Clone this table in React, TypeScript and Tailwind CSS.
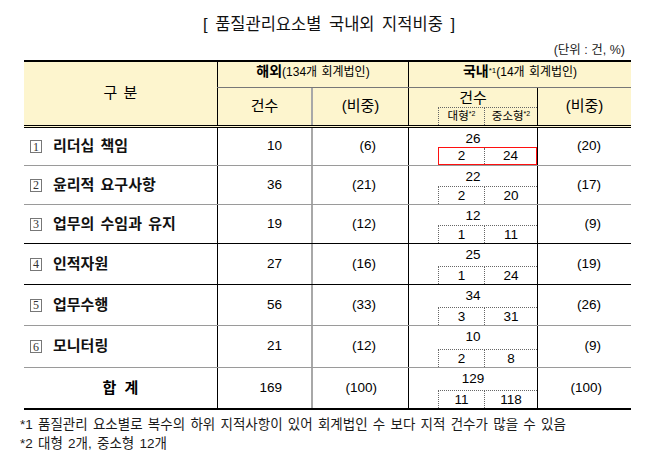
const FONT = { fontFamily: '"Liberation Sans", "Noto Sans CJK KR", sans-serif' }

type Row = {
  n: number
  label: string
  a: number
  ap: string
  d: number
  big: number
  small: number
  dp: string
  h: string
  line: string
  red?: boolean
}

const rows: Row[] = [
  { n: 1, label: '리더십 책임', a: 10, ap: '(6)', d: 26, big: 2, small: 24, dp: '(20)', h: 'h-[38px]', line: 'border-[#9a9a9a]', red: true },
  { n: 2, label: '윤리적 요구사항', a: 36, ap: '(21)', d: 22, big: 2, small: 20, dp: '(17)', h: 'h-[39px]', line: 'border-[#9a9a9a]' },
  { n: 3, label: '업무의 수임과 유지', a: 19, ap: '(12)', d: 12, big: 1, small: 11, dp: '(9)', h: 'h-[39px]', line: 'border-black' },
  { n: 4, label: '인적자원', a: 27, ap: '(16)', d: 25, big: 1, small: 24, dp: '(19)', h: 'h-[41px]', line: 'border-black' },
  { n: 5, label: '업무수행', a: 56, ap: '(33)', d: 34, big: 3, small: 31, dp: '(26)', h: 'h-[41px]', line: 'border-[#9a9a9a]' },
  { n: 6, label: '모니터링', a: 21, ap: '(12)', d: 10, big: 2, small: 8, dp: '(9)', h: 'h-[42px]', line: 'border-[#9a9a9a]' },
]

function SubBox({ left, right, red }: { left: React.ReactNode; right: React.ReactNode; red?: boolean }) {
  return (
    <div className="flex justify-end">
      <div
        className={`flex w-[99px] h-[18px] ${
          red ? 'border border-[#ff1010]' : 'border-t border-l border-dotted border-[#666]'
        }`}
      >
        <div className="w-[45px] flex items-center justify-center leading-none">{left}</div>
        <div className="flex-1 flex items-center justify-center leading-none border-l border-dotted border-[#666]">{right}</div>
      </div>
    </div>
  )
}

function DataRow({ r }: { r: Row }) {
  return (
    <div className={`flex ${r.h} border-b ${r.line}`}>
      <div className="w-[193px] flex items-center pl-[6px]">
        <span
          className="w-[12px] h-[13px] border border-[#777] flex items-center justify-center text-[12px] leading-none text-[#333]"
          style={{ fontFamily: '"Liberation Serif", serif' }}
        >
          {r.n}
        </span>
        <span className="ml-[11px] text-[15px] font-bold text-[#111] [word-spacing:2px]">{r.label}</span>
      </div>
      <div className="w-[94px] border-l border-black flex items-center justify-end pr-[29px] text-[13.5px]">{r.a}</div>
      <div className="w-[97px] border-l-2 border-[#a8a8a8] flex items-center justify-end pr-[32px] text-[13.5px]">{r.ap}</div>
      <div className="w-[129px] border-l border-black flex flex-col justify-between text-[13.5px]">
        <div className="text-center leading-none pt-[4px]">{r.d}</div>
        <SubBox left={r.big} right={r.small} red={r.red} />
      </div>
      <div className="w-[94px] border-l border-black flex items-center justify-end pr-[30px] text-[13.5px]">{r.dp}</div>
    </div>
  )
}

export default function App() {
  return (
    <div className="w-[658px] h-[469px] bg-white text-black" style={FONT}>
      {/* 제목 */}
      <div className="pt-[13px] h-[40px] text-center text-[16.5px] leading-[22px] [word-spacing:3px] text-[#111]">
        [ 품질관리요소별 국내외 지적비중 ]
      </div>
      <div className="h-[20px] flex justify-end pr-[33px] text-[12.5px] leading-[20px] text-[#222]">(단위 : 건, %)</div>

      {/* 표 */}
      <div className="ml-[24px] w-[607px] border-t-2 border-black">
        {/* 헤더 */}
        <div className="flex bg-[#fdf5ce] border-b-[3px] border-double border-black h-[66px]">
          <div className="w-[193px] flex items-center justify-center text-[15px] [word-spacing:2px]">구 분</div>
          <div className="flex-1 flex flex-col">
            <div className="flex h-[26px] border-b border-[#777]">
              <div className="w-[191px] border-l border-black flex items-center justify-center pb-[6px]">
                <span className="text-[14px] font-bold">해외</span>
                <span className="text-[12px] [word-spacing:1px]">(134개 회계법인)</span>
              </div>
              <div className="flex-1 border-l border-black flex items-center justify-center pb-[6px]">
                <span className="text-[14px] font-bold">국내</span>
                <span className="text-[8px] self-start mt-[3px]">*1</span>
                <span className="text-[12px] [word-spacing:1px]">(14개 회계법인)</span>
              </div>
            </div>
            <div className="flex flex-1">
              <div className="w-[94px] border-l border-black flex items-center justify-center text-[15px]">건수</div>
              <div className="w-[97px] border-l-2 border-[#a8a8a8] flex items-center justify-center text-[15px]">(비중)</div>
              <div className="w-[129px] border-l border-black flex flex-col justify-between">
                <div className="text-center text-[15px] leading-none pt-[2px]">건수</div>
                <SubBox
                  left={
                    <span className="text-[11.5px]">
                      대형<sup className="text-[7px]">*2</sup>
                    </span>
                  }
                  right={
                    <span className="text-[11.5px]">
                      중소형<sup className="text-[7px]">*2</sup>
                    </span>
                  }
                />
              </div>
              <div className="flex-1 border-l border-black flex items-center justify-center text-[15px]">(비중)</div>
            </div>
          </div>
        </div>

        {/* 본문 */}
        {rows.map(r => (
          <DataRow key={r.n} r={r} />
        ))}

        {/* 합계 */}
        <div className="flex h-[42px] border-b-2 border-black">
          <div className="w-[193px] flex items-center justify-center text-[15px] font-bold [word-spacing:4px]">합 계</div>
          <div className="w-[94px] border-l border-black flex items-center justify-end pr-[29px] text-[13.5px]">169</div>
          <div className="w-[97px] border-l-2 border-[#a8a8a8] flex items-center justify-end pr-[31px] text-[13.5px]">(100)</div>
          <div className="w-[129px] border-l border-black flex flex-col justify-between text-[13.5px]">
            <div className="text-center leading-none pt-[4px]">129</div>
            <SubBox left={11} right={118} />
          </div>
          <div className="w-[94px] border-l border-black flex items-center justify-end pr-[29px] text-[13.5px]">(100)</div>
        </div>
      </div>

      {/* 주석 */}
      <div className="pl-[20px] pt-[5px] text-[13.5px] leading-[19px] text-[#1a1a1a] [word-spacing:1.5px]">
        <p>*1 품질관리 요소별로 복수의 하위 지적사항이 있어 회계법인 수 보다 지적 건수가 많을 수 있음</p>
        <p>*2 대형 2개, 중소형 12개</p>
      </div>
    </div>
  )
}
